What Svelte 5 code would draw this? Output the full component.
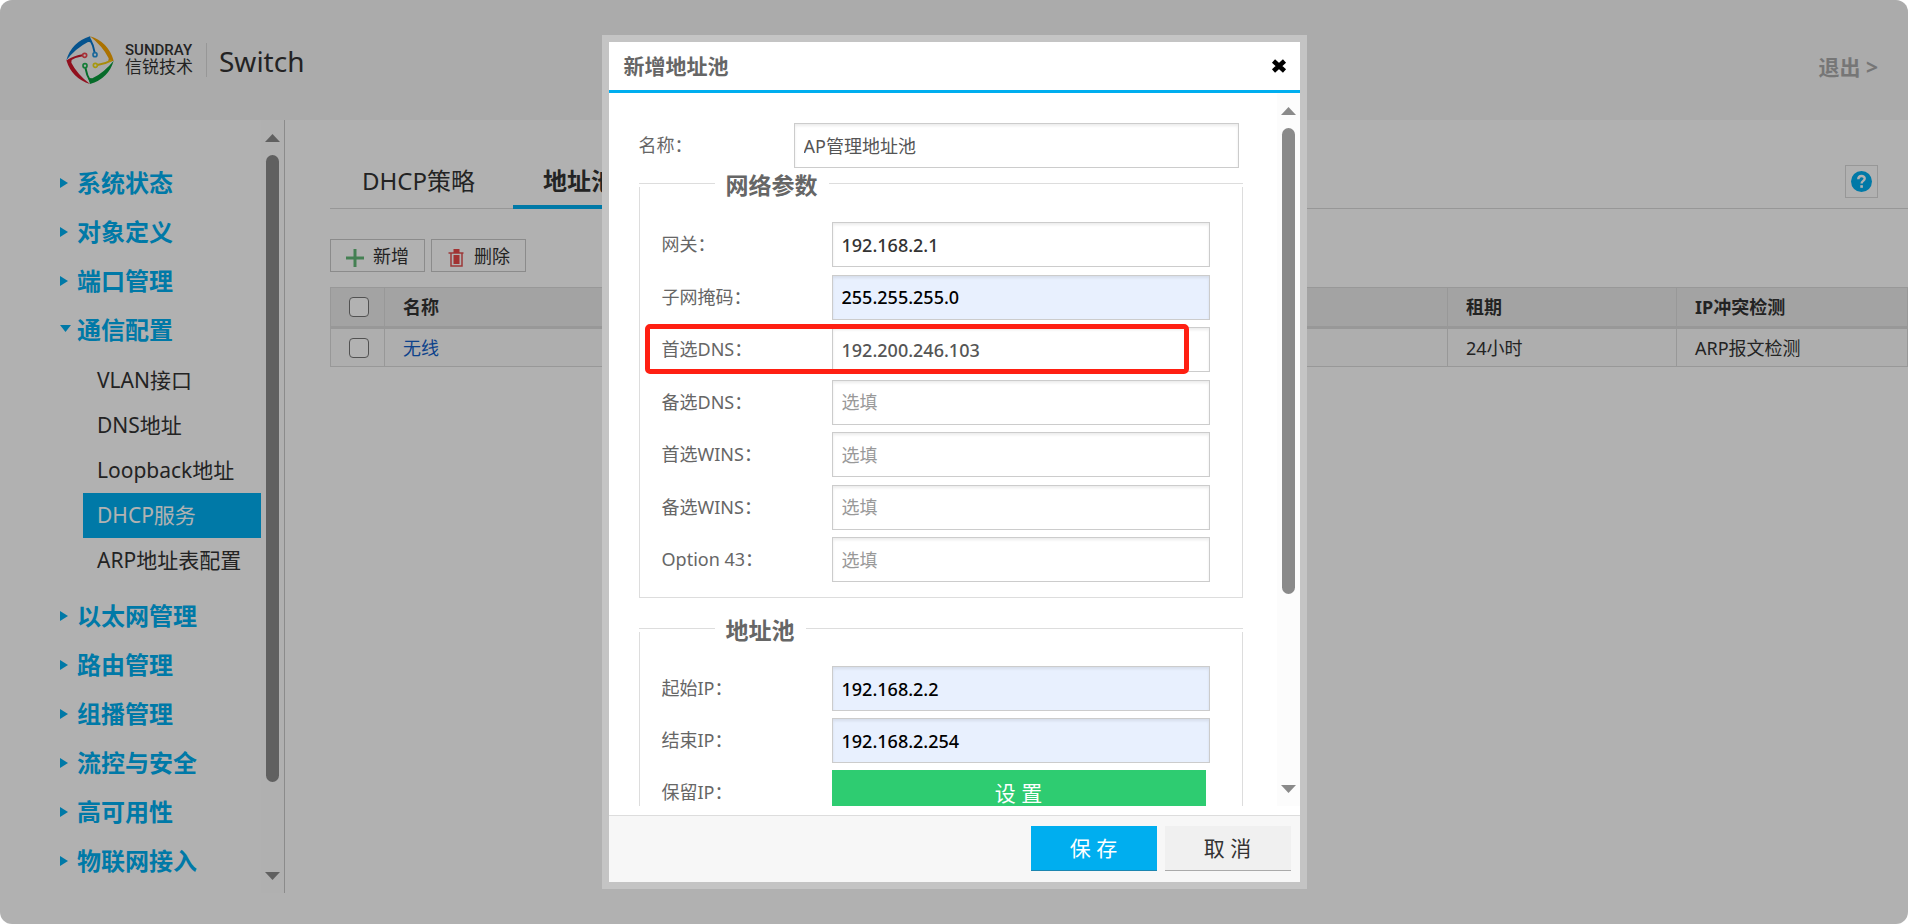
<script>
  const topGroups = ['系统状态', '对象定义', '端口管理'];
  const openGroup = {
    label: '通信配置',
    items: ['VLAN接口', 'DNS地址', 'Loopback地址', 'DHCP服务', 'ARP地址表配置'],
    active: 'DHCP服务'
  };
  const bottomGroups = ['以太网管理', '路由管理', '组播管理', '流控与安全', '高可用性', '物联网接入'];

  const networkFields = [
    { id: 'gateway', label: '网关：', value: '192.168.2.1', kind: 'typed' },
    { id: 'mask', label: '子网掩码：', value: '255.255.255.0', kind: 'filled' },
    { id: 'dns1', label: '首选DNS：', value: '192.200.246.103', kind: 'plain', marked: true },
    { id: 'dns2', label: '备选DNS：', value: '', kind: 'plain' },
    { id: 'wins1', label: '首选WINS：', value: '', kind: 'plain' },
    { id: 'wins2', label: '备选WINS：', value: '', kind: 'plain' },
    { id: 'opt43', label: 'Option 43：', value: '', kind: 'plain' }
  ];
  const rangeFields = [
    { id: 'start', label: '起始IP：', value: '192.168.2.2' },
    { id: 'end', label: '结束IP：', value: '192.168.2.254' }
  ];
</script>

{#snippet scrollbar(size)}
  <div class="scrollbar" aria-hidden="true">
    <svg width="15" height="8" viewBox="0 0 15 8"><path d="M7.5 0 15 8H0z" /></svg>
    <div class="thumb" style="height: {size}%"></div>
    <svg class="down" width="15" height="8" viewBox="0 0 15 8"><path d="M0 0h15L7.5 8z" /></svg>
  </div>
{/snippet}

{#snippet group(label)}
  <li>
    <button class="group">
      <svg width="12" height="12" viewBox="0 0 12 12"><path d="M0 1l8 5-8 5z" /></svg>{label}
    </button>
  </li>
{/snippet}

<div class="page">
  <header class="top">
    <div class="brand">
      <svg class="mark" width="48" height="48" viewBox="198 107 144 144" fill="none">
        <path fill="#0878cc" d="M199 180Q214 126 270 108L275 126 264 125Q228 143 199 180Z" />
        <path fill="#f5a400" d="M270 108Q324 124 341 181L325 185 326 174Q309 139 270 108Z" />
        <path fill="#0a9a3c" d="M341 181Q326 234 270 251L265 233 277 234Q312 217 341 181Z" />
        <path fill="#d0182c" d="M270 251Q216 235 199 180L215 177 214 187Q231 221 270 251Z" />
        <path stroke="#0878cc" stroke-width="6" d="M270 117Q280 134 284 157" />
        <path stroke="#f0c814" stroke-width="6" d="M335 180Q314 191 292 194" />
        <path stroke="#0a9a3c" stroke-width="6" d="M271 243Q260 225 256 202" />
        <path stroke="#d0182c" stroke-width="6" d="M204 181Q225 168 248 165" />
        <g stroke-width="5">
          <circle cx="285" cy="163" r="6" stroke="#2896dc" />
          <circle cx="286" cy="195" r="6" stroke="#f0dc14" />
          <circle cx="255" cy="196" r="6" stroke="#1eb450" />
          <circle cx="254" cy="165" r="6" stroke="#f04650" />
        </g>
      </svg>
      <div class="names">
        <span class="en">SUNDRAY</span>
        <span class="cn">信锐技术</span>
      </div>
      <span class="product">Switch</span>
    </div>
    <a class="logout" href="#logout">退出 &gt;</a>
  </header>

  <div class="body">
    <nav class="side">
      <ul class="menu">
        {#each topGroups as label}{@render group(label)}{/each}
        <li>
          <button class="group open">
            <svg width="12" height="12" viewBox="0 0 12 12"><path d="M0 1h11L5.500 8z" /></svg>{openGroup.label}
          </button>
          <ul class="sub">
            {#each openGroup.items as item}
              <li><a href="#menu" class:active={item === openGroup.active}>{item}</a></li>
            {/each}
          </ul>
        </li>
        {#each bottomGroups as label}{@render group(label)}{/each}
      </ul>
      {@render scrollbar(84)}
    </nav>

    <main>
      <div class="tabs">
        <button class="tab">DHCP策略</button>
        <button class="tab current">地址池</button>
        <button class="help" aria-label="帮助">
          <svg width="21" height="21" viewBox="0 0 21 21">
            <circle cx="10.500" cy="10.500" r="10.500" fill="#00aeef" />
            <path d="M7.300 8.300C7.300 3.900 13.900 4.200 13.700 7.800 13.600 10 10.600 9.900 10.600 12.500" fill="none" stroke="#fff" stroke-width="2.400" />
            <rect x="9.300" y="14.200" width="2.600" height="2.600" fill="#fff" />
          </svg>
        </button>
      </div>

      <div class="tools">
        <button>
          <svg width="18" height="18" viewBox="0 0 18 18"><path d="M9 0v18M0 9h18" stroke="#62b878" stroke-width="3" /></svg>
          新增
        </button>
        <button>
          <svg width="18" height="18" viewBox="0 0 18 18">
            <path d="M1.500 4h15M4 4v13h11V4" fill="none" stroke="#e05050" stroke-width="1.500" />
            <path d="M6.500 0h6v4h-6z M6.500 6h6v9h-6z" fill="#e84848" />
          </svg>
          删除
        </button>
      </div>

      <table>
        <thead>
          <tr>
            <th class="pick"><input type="checkbox" aria-label="全选" /></th>
            <th>名称</th>
            <th class="lease">租期</th>
            <th class="check">IP冲突检测</th>
          </tr>
        </thead>
        <tbody>
          <tr>
            <td class="pick"><input type="checkbox" aria-label="无线" /></td>
            <td><a href="#pool">无线</a></td>
            <td>24小时</td>
            <td>ARP报文检测</td>
          </tr>
        </tbody>
      </table>
    </main>
  </div>

  <div class="overlay">
    <div class="dialog" role="dialog" aria-labelledby="dialog-title">
      <div class="title">
        <h2 id="dialog-title">新增地址池</h2>
        <button aria-label="关闭">
          <svg width="16" height="14" viewBox="0 0 16 14"><path d="M2.500 2l11 10M13.500 2l-11 10" stroke="#000" stroke-width="4.600" /></svg>
        </button>
      </div>

      <div class="content">
        <form>
          <div class="field name">
            <label for="pool-name">名称：</label>
            <input id="pool-name" type="text" value="AP管理地址池" />
          </div>

          <fieldset>
            <legend>网络参数</legend>
            <div class="rows network">
              {#each networkFields as f}
                <div class="field" class:marked={f.marked}>
                  <label for={f.id}>{f.label}</label>
                  <input id={f.id} class={f.kind} type="text" value={f.value} placeholder="选填" />
                </div>
              {/each}
            </div>
          </fieldset>

          <fieldset class="range">
            <legend>地址池</legend>
            <div class="rows">
              {#each rangeFields as f}
                <div class="field">
                  <label for={f.id}>{f.label}</label>
                  <input id={f.id} class="filled" type="text" value={f.value} />
                </div>
              {/each}
              <div class="field">
                <label for="reserved">保留IP：</label>
                <button id="reserved" class="set" type="button">设 置</button>
              </div>
            </div>
          </fieldset>
        </form>
        {@render scrollbar(68)}
      </div>

      <div class="actions">
        <button class="save">保 存</button>
        <button class="cancel">取 消</button>
      </div>
    </div>
  </div>
</div>

<style>
  :global(body) {
    margin: 0;
    background: #fff;
  }

  .page {
    position: relative;
    box-sizing: border-box;
    min-height: 100vh;
    padding-bottom: 31px;
    display: flex;
    flex-direction: column;
    overflow: hidden;
    border-radius: 12px;
    background: #fefefe;
    color: #333;
    font: 18px/24px "Noto Sans", "Noto Sans CJK SC", sans-serif;
  }

  button,
  input {
    box-sizing: border-box;
    margin: 0;
    padding: 0;
    border: 0;
    border-radius: 0;
    background: none;
    color: inherit;
    font: inherit;
  }

  a {
    color: inherit;
    text-decoration: none;
  }

  ul {
    margin: 0;
    padding: 0;
    list-style: none;
  }

  .top {
    height: 120px;
    box-sizing: border-box;
    padding: 0 30px 0 66px;
    display: flex;
    justify-content: space-between;
    background: #f5f5f5;
  }

  .brand {
    height: 120px;
    display: flex;
    align-items: center;
  }

  .names {
    display: flex;
    flex-direction: column;
    margin-left: 11px;
    padding-right: 13px;
    border-right: 1px solid #d8d8d8;
  }

  .en {
    font: 500 15px/14px Roboto, sans-serif;
  }

  .cn {
    font-size: 17px;
    line-height: 20px;
  }

  .product {
    margin-left: 12px;
    padding-top: 2px;
    font-size: 28px;
    line-height: 36px;
  }

  .logout {
    align-self: center;
    padding-top: 14px;
    color: #aaa;
    font-size: 21px;
    font-weight: 700;
  }

  .body {
    flex: 1;
    display: flex;
  }

  .side {
    flex: none;
    width: 285px;
    box-sizing: border-box;
    display: flex;
    justify-content: space-between;
    border-right: 1px solid #c8c8c8;
  }

  .menu {
    flex: 1;
    padding: 38px 0 0 60px;
  }

  .group {
    width: 100%;
    height: 49px;
    display: flex;
    align-items: center;
    gap: 5px;
    color: #00aeef;
    font-size: 24px;
    font-weight: 700;
    line-height: 32px;
  }

  .group svg {
    fill: #00aeef;
  }

  .sub {
    padding: 4px 0 8px 23px;
  }

  .sub a {
    display: block;
    padding-left: 14px;
    font-size: 21px;
    line-height: 45px;
    white-space: nowrap;
  }

  .sub .active {
    background: #00aeef;
    color: #fff;
  }

  .scrollbar {
    flex: none;
    width: 23px;
    box-sizing: border-box;
    padding: 14px 0 13px;
    display: flex;
    flex-direction: column;
    align-items: center;
    background: #fcfcfc;
  }

  .scrollbar svg {
    flex: none;
    fill: #8a8a8a;
  }

  .scrollbar .down {
    margin-top: auto;
  }

  .thumb {
    width: 13px;
    margin-top: 13px;
    border-radius: 7px;
    background: #8a8a8a;
  }

  main {
    flex: 1;
    min-width: 0;
    padding-left: 45px;
  }

  .tabs {
    height: 89px;
    box-sizing: border-box;
    display: flex;
    align-items: flex-end;
    border-bottom: 1px solid #d8d8d8;
  }

  .tab {
    height: 53px;
    margin-bottom: -1px;
    padding: 0 38px 4px 32px;
    font-size: 24px;
    line-height: 48px;
  }

  .tab.current {
    padding: 0 30px;
    border-bottom: 4px solid #00aeef;
    font-weight: 700;
  }

  .help {
    width: 33px;
    height: 33px;
    margin: 0 30px 10px auto;
    display: grid;
    place-items: center;
    border: 1px solid #d8d8d8;
  }

  .tools {
    display: flex;
    gap: 6px;
    padding: 30px 0 15px;
  }

  .tools button {
    width: 95px;
    height: 33px;
    padding: 0 15px;
    display: flex;
    align-items: center;
    justify-content: space-between;
    border: 1px solid #c8c8c8;
  }

  .tools svg {
    margin-top: 4px;
  }

  table {
    width: 100%;
    table-layout: fixed;
    border-collapse: collapse;
    text-align: left;
  }

  th,
  td {
    height: 37px;
    padding: 0 18px;
    border: 1px solid #dadada;
    background: #f9f9f9;
  }

  th {
    height: 38px;
    border-bottom-width: 3px;
    background: #eaeaea;
  }

  th.pick {
    width: 17px;
  }

  .lease {
    width: 192px;
  }

  .check {
    width: 194px;
  }

  td a {
    color: #1461c8;
  }

  .pick input {
    appearance: none;
    display: block;
    width: 20px;
    height: 20px;
    border: 1px solid #767676;
    border-radius: 4px;
    background: #fff;
  }

  .overlay {
    position: absolute;
    inset: 0;
    display: flex;
    align-items: center;
    justify-content: center;
    background: rgba(0, 0, 0, 0.3);
  }

  .dialog {
    width: 691px;
    height: calc(100vh - 84px);
    display: flex;
    flex-direction: column;
    border: 7px solid #c4c4c4;
    background: #fff;
    color: #666;
  }

  .title {
    height: 48px;
    padding: 0 13px 0 15px;
    display: flex;
    align-items: center;
    justify-content: space-between;
    border-bottom: 3px solid #00aeef;
  }

  h2 {
    margin: 0;
    font-size: 21px;
    font-weight: 700;
    line-height: 28px;
  }

  .title svg {
    display: block;
  }

  .content {
    flex: 1;
    min-height: 0;
    margin-bottom: 9px;
    display: flex;
    overflow: hidden;
  }

  form {
    flex: 1;
    padding: 30px 34px 0 30px;
  }

  .field {
    height: 45px;
    display: flex;
  }

  .field label {
    width: 170px;
    line-height: 45px;
  }

  .field input {
    flex: 1;
    min-width: 0;
    padding: 0 9px;
    border: 1px solid #ccc;
    background: #fff;
    box-shadow: inset 0 2px 3px rgba(0, 0, 0, 0.08);
    color: #555;
  }

  .field input::placeholder {
    color: #999;
    opacity: 1;
  }

  .name {
    margin: 0 4px 15px 0;
  }

  .name label {
    width: 155px;
  }

  .rows .field input {
    font-weight: 500;
  }

  .rows .field input::placeholder {
    font-weight: 400;
  }

  .field .typed {
    color: #333;
  }

  .field .filled {
    background: #e8f0fe;
    color: #000;
  }

  fieldset {
    min-width: 0;
    margin: 0;
    padding: 0 32px 0 22px;
    border: 1px solid #ddd;
    border-top: 0;
    margin-bottom: 30px;
  }

  legend {
    display: flex;
    width: calc(100% + 56px);
    height: 4px;
    margin: 0 -23px;
    padding: 0;
    align-items: center;
    gap: 11px;
    font-size: 23px;
    font-weight: 700;
    line-height: 4px;
  }

  legend::before,
  legend::after {
    content: "";
    height: 3px;
    border-top: 1px solid #ddd;
  }

  legend::before {
    width: 76px;
  }

  legend::after {
    flex: 1;
  }

  .rows {
    display: flex;
    flex-direction: column;
    gap: 7px;
    padding-top: 34px;
  }

  .network {
    height: 360px;
    gap: 0;
    justify-content: space-between;
    padding-top: 35px;
    padding-bottom: 15px;
  }

  .marked {
    position: relative;
  }

  .marked::after {
    content: "";
    position: absolute;
    inset: -3px 21px -2px -17px;
    border: 5px solid #ff1f12;
    border-radius: 5px;
    pointer-events: none;
  }

  .set {
    flex: 1;
    margin-right: 4px;
    background: #2ecc71;
    color: #fff;
    font-size: 21px;
  }

  .actions {
    height: 56px;
    padding: 10px 9px 0 0;
    display: flex;
    align-items: flex-start;
    justify-content: flex-end;
    gap: 8px;
    border-top: 1px solid #ddd;
    background: #f7f7f7;
  }

  .actions button {
    width: 126px;
    height: 45px;
    border-bottom: 1px solid #aaa;
    background: #f0f0f0;
    color: #333;
    font-size: 21px;
  }

  .actions .save {
    border-bottom-color: #1c86b0;
    background: #00aeef;
    color: #fff;
  }
</style>
